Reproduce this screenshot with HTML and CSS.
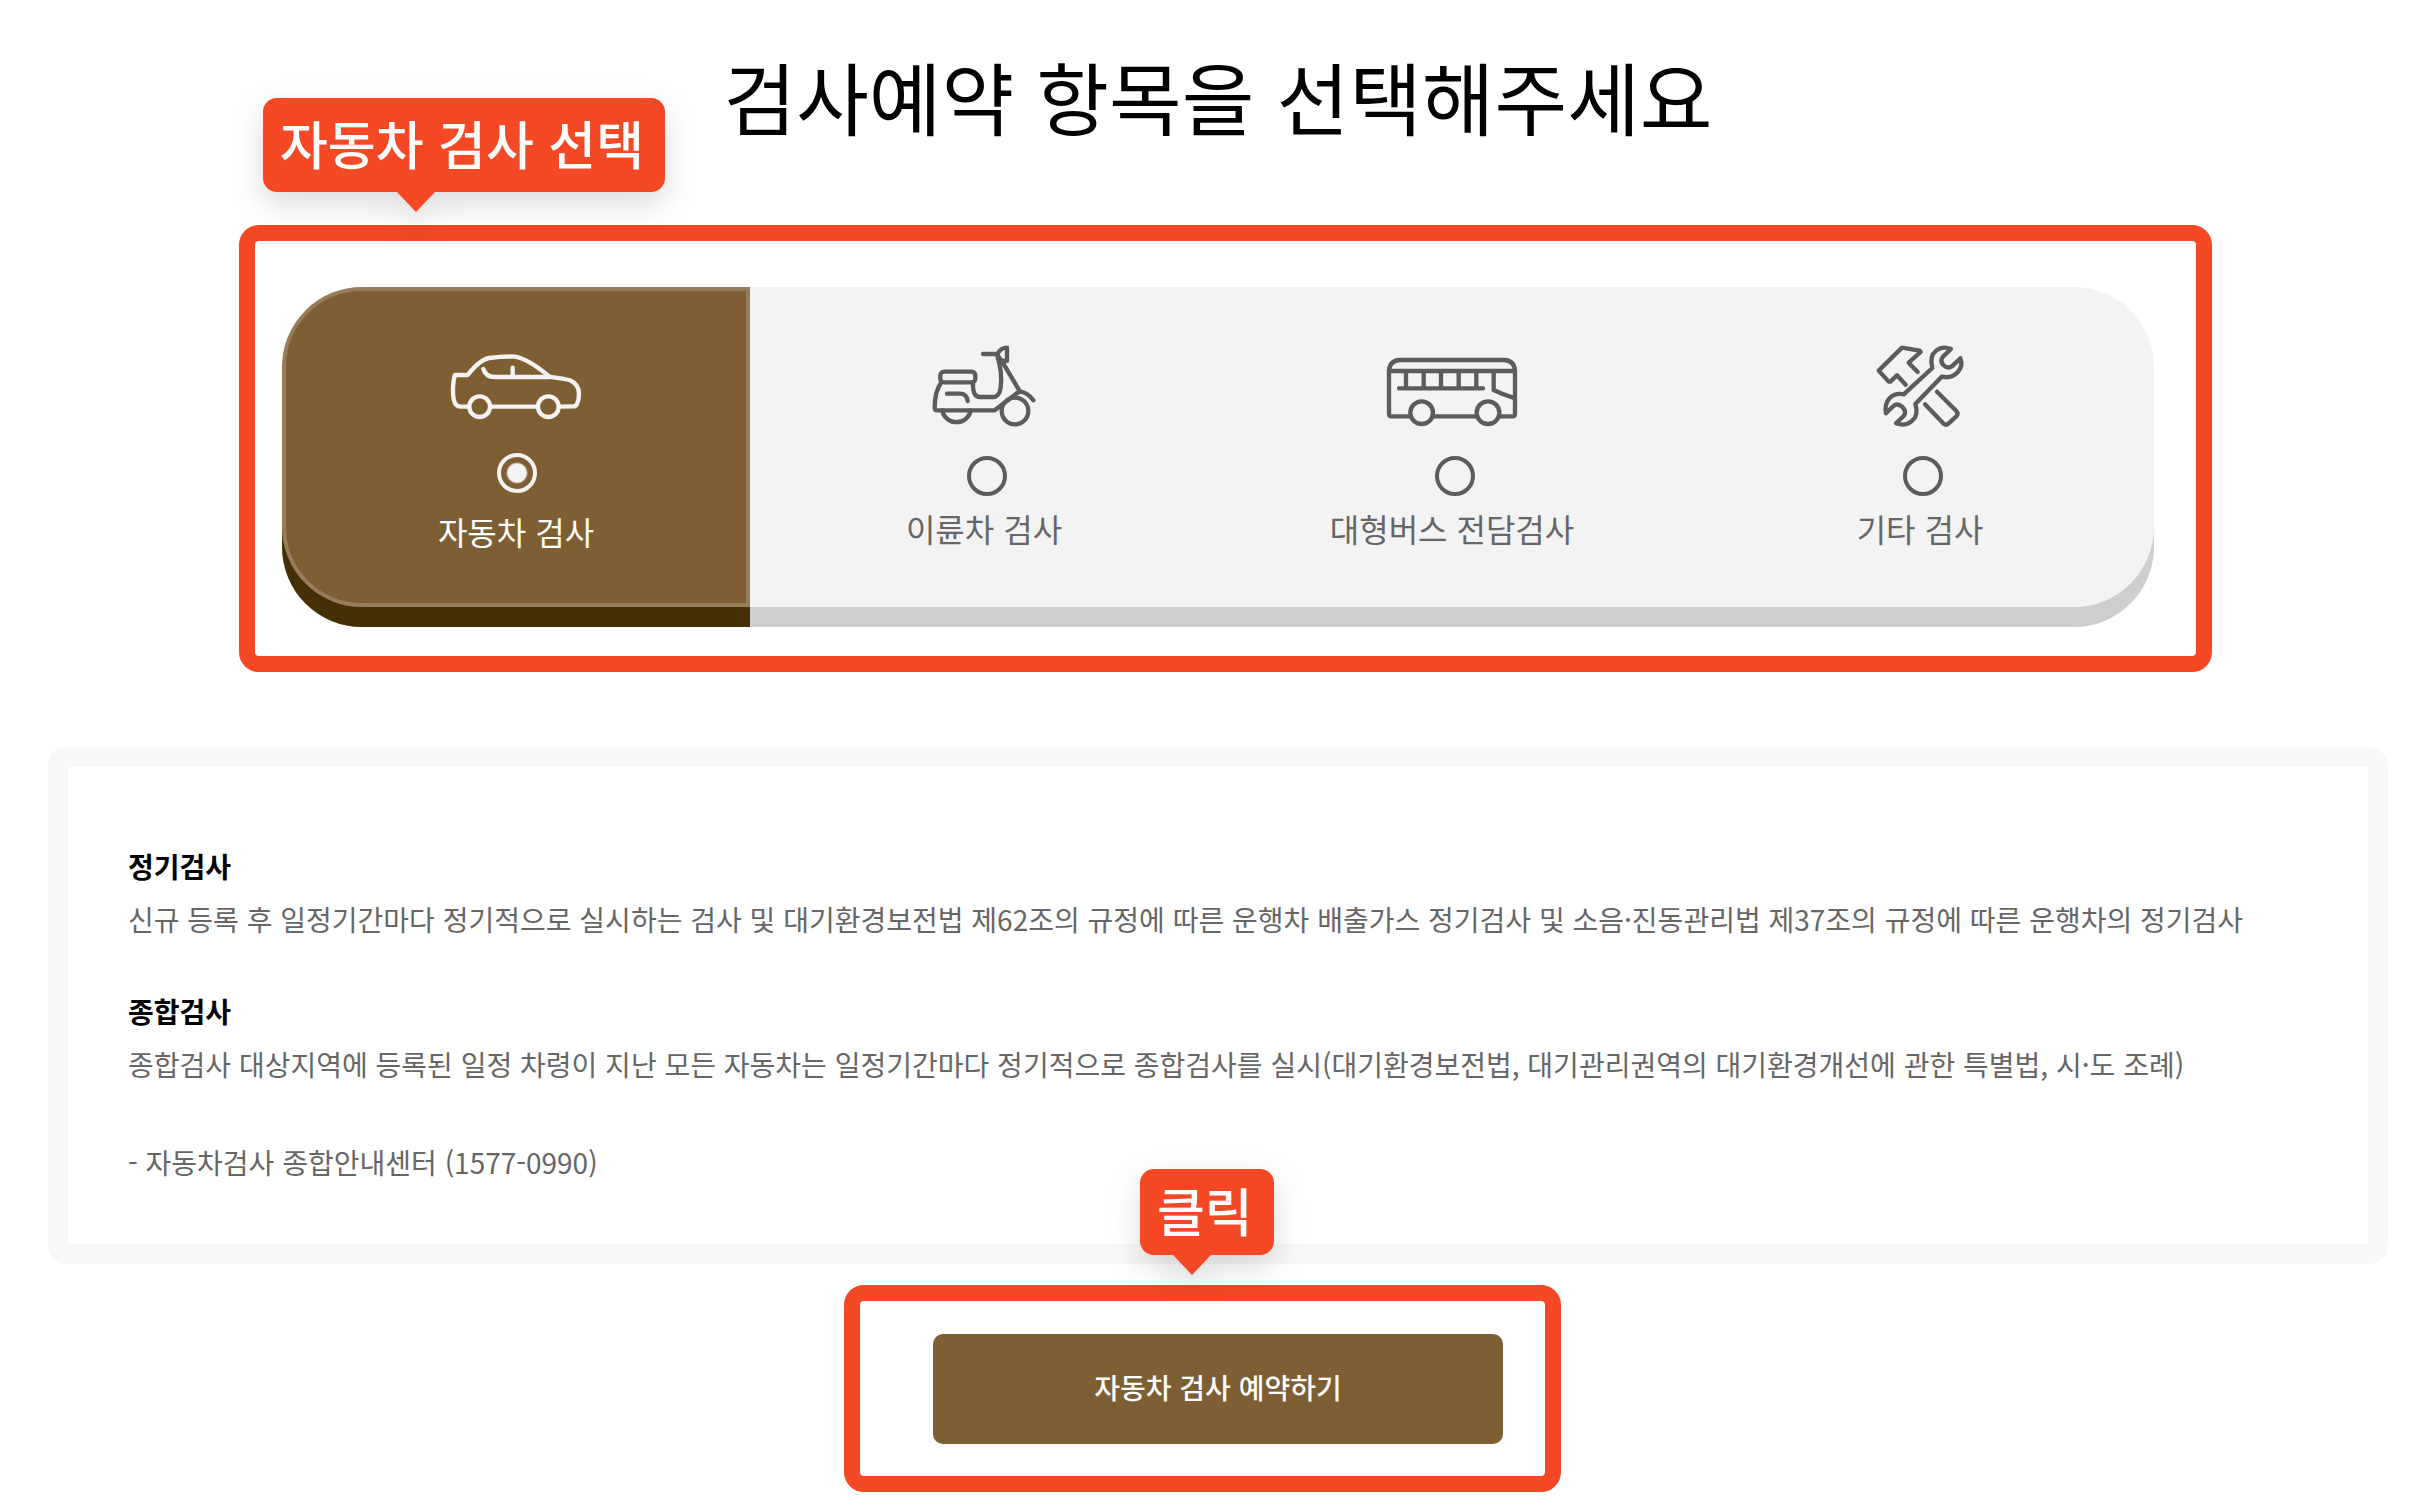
FILE: index.html
```html
<!DOCTYPE html>
<html lang="ko">
<head>
    <meta charset="UTF-8">
    <meta name="viewport" content="width=device-width, initial-scale=1.0">
    <title>검사예약</title>
    <link rel="stylesheet" href="styles.css">
</head>
<body>
    <main class="reserve">
        <h1 class="reserve-title">검사예약 항목을 선택해주세요</h1>

        <form class="reserve-form">
            <div class="guide guide-tabs">
                <div class="tabs">
                    <label class="tab active">
                        <span class="tab-icon">
                            <svg width="130" height="65" viewBox="0 0 390 195" aria-hidden="true">
                                <path d="M54 155H30C12 155 6 140 6 105C6 88 8 72 12 60H50C72 32 94 12 115 9C145 5 175 4 192 5C222 10 262 37 295 65C322 70 340 71 357 76C375 84 384 100 384 117C384 130 382 138 378 147Q375 154 366 154L324 155M118 155H260"/>
                                <path d="M97 42C103 60 115 66 130 66H295M185 66V38"/>
                                <circle cx="86" cy="155" r="31"/>
                                <circle cx="292" cy="155" r="31"/>
                            </svg>
                        </span>
                        <input type="radio" name="inspection" class="tab-radio" checked>
                        <span class="tab-name">자동차 검사</span>
                    </label>
                    <label class="tab">
                        <span class="tab-icon">
                            <svg width="102" height="80" viewBox="0 0 306 240" aria-hidden="true">
                                <rect x="22" y="77" width="105" height="32" rx="11"/>
                                <path d="M25 109C10 130 5 158 5 185Q5 193 13 193H185L244 148Q252 140 261 137L207 46"/>
                                <path d="M193 30C203 62 207 95 203 125C200 145 192 153 180 153H142C126 153 119 141 120 109"/>
                                <path d="M261 137C277 139 291 149 301 163M150 24H192"/>
                                <path d="M193 24C200 12 210 5 222 5V45H211C203 42 197 35 193 24Z"/>
                                <path d="M42 143H80Q101 143 104 165M28 193A43 42 0 0 0 113 193"/>
                                <circle cx="246" cy="195" r="40"/>
                            </svg>
                        </span>
                        <input type="radio" name="inspection" class="tab-radio">
                        <span class="tab-name">이륜차 검사</span>
                    </label>
                    <label class="tab">
                        <span class="tab-icon">
                            <svg width="130" height="68" viewBox="0 0 390 204" aria-hidden="true">
                                <path d="M71 175H14Q6 175 6 167V38Q8 8 38 6H352Q382 8 384 38V167Q384 175 376 175H338M137 175H270"/>
                                <path d="M6 39H384M36 91H288M57 39V91M110 39V91M162 39V91M215 39V91M268 39V91"/>
                                <path d="M320 39V96Q345 109 379 119"/>
                                <circle cx="104" cy="164" r="34"/>
                                <circle cx="303" cy="164" r="34"/>
                            </svg>
                        </span>
                        <input type="radio" name="inspection" class="tab-radio">
                        <span class="tab-name">대형버스 전담검사</span>
                    </label>
                    <label class="tab">
                        <span class="tab-icon">
                            <svg width="86" height="80" viewBox="0 0 258 240" aria-hidden="true">
                                <path d="M122 78L95 50L131 18L128 14L75 5L5 74L35 107H40L60 88L86 116"/>
                                <path d="M180 137L238 195Q245 203 238 211L214 233Q207 239 200 233L144 175"/>
                                <path d="M166 66L80 145C45 138 20 165 27 202L46 183Q60 168 75 182Q91 197 80 210L57 232C90 244 131 222 115 174L194 92C235 101 262 66 250 37L225 61Q213 70 199 57Q188 44 198 32L222 9C192 -3 152 15 166 66Z"/>
                            </svg>
                        </span>
                        <input type="radio" name="inspection" class="tab-radio">
                        <span class="tab-name">기타 검사</span>
                    </label>
                </div>
                <div class="callout">자동차 검사 선택</div>
            </div>

            <section class="info">
                <h2>정기검사</h2>
                <p>신규 등록 후 일정기간마다 정기적으로 실시하는 검사 및 대기환경보전법 제62조의 규정에 따른 운행차 배출가스 정기검사 및 소음·진동관리법 제37조의 규정에 따른 운행차의 정기검사</p>
                <h2>종합검사</h2>
                <p>종합검사 대상지역에 등록된 일정 차령이 지난 모든 자동차는 일정기간마다 정기적으로 종합검사를 실시(대기환경보전법, 대기관리권역의 대기환경개선에 관한 특별법, 시·도 조례)</p>
                <p class="info-contact">- 자동차검사 종합안내센터 (1577-0990)</p>
            </section>

            <div class="guide guide-submit">
                <button type="button" class="submit-btn">자동차 검사 예약하기</button>
                <div class="callout">클릭</div>
            </div>
        </form>
    </main>
</body>
</html>
```

FILE: styles.css
```css
* {
    margin: 0;
    padding: 0;
    box-sizing: border-box;
}
body {
    font-family: 'Noto Sans CJK KR', 'Noto Sans', sans-serif;
    background: #fff;
    color: #000;
}
.reserve { padding: 36px 46px 56px 48px; }
.reserve-title { font-size: 79px; font-weight: 400; line-height: 120px; text-align: center; margin-bottom: 131px; }

/* Inspection type */
.tabs { display: grid; grid-template-columns: repeat(4, 1fr); border-radius: 80px; background: #f3f3f3; box-shadow: 0 20px 0 #cecece; }
.tab { display: flex; flex-direction: column; align-items: center; height: 320px; padding-top: 59px; color: #666; cursor: pointer; }
.tab-icon { display: flex; align-items: flex-end; height: 80px; }
.tab-icon svg { display: block; overflow: visible; fill: none; stroke: #5c5c5c; stroke-width: 13; stroke-linecap: round; stroke-linejoin: round; }
.tab-radio { appearance: none; width: 40px; height: 40px; margin: 30px 0 8px 6px; border: 4px solid #5c5c5c; border-radius: 50%; cursor: pointer; }
.tab-name { font-size: 32px; line-height: 48px; }
.tab.active { padding-top: 56px; border: 4px solid #967c5a; border-radius: 80px 0 0 80px; background: #7e5e33; box-shadow: 0 20px 0 #453005; color: #fff; }
.tab.active .tab-icon { height: 73px; }
.tab.active svg { stroke: #f3f3f3; }
.tab.active .tab-radio { margin: 33px 0 14px 2px; border-color: #f3f3f3; background: radial-gradient(circle, #f3f3f3 9px, transparent 11px); }

/* Notice box */
.info { margin-top: 140px; padding: 73px 60px 55px; border: 20px solid #f8f8f8; border-radius: 18px; font-size: 28px; line-height: 53px; color: #666; }
.info h2 { font-size: 28px; font-weight: 700; color: #000; }
.info p + h2 { margin-top: 39px; }
.info-contact { margin-top: 45px; }

.submit-btn { display: block; width: 100%; height: 110px; padding-bottom: 4px; border: none; border-radius: 10px; background: #7e5e33; color: #fff; font-family: inherit; font-size: 28px; font-weight: 500; cursor: pointer; }

/* Guide frames and callouts over the page */
.guide { position: relative; }
.guide::after { content: ''; position: absolute; border: 16px solid #f54825; border-radius: 20px; pointer-events: none; }
.guide-tabs { width: 80%; margin: 0 auto; }
.guide-tabs::after { inset: -62px -58px -65px -43px; }
.guide-submit { width: 570px; margin: 70px auto 0; }
.guide-submit::after { inset: -49px -58px -48px -89px; }
.callout { position: absolute; z-index: 1; padding: 0 21px 4px 17px; border-radius: 14px; background: #f54825; color: #fff; font-size: 52px; font-weight: 500; white-space: nowrap; filter: drop-shadow(0 12px 16px rgba(0, 0, 0, 0.14)); }
.callout::after { content: ''; position: absolute; top: 100%; border: solid transparent; border-width: 20px 19px 0; border-top-color: #f54825; }
.guide-tabs .callout { top: -189px; left: -19px; line-height: 90px; }
.guide-tabs .callout::after { left: 134px; }
.guide-submit .callout { top: -165px; left: 207px; line-height: 82px; }
.guide-submit .callout::after { left: 33px; }
```
